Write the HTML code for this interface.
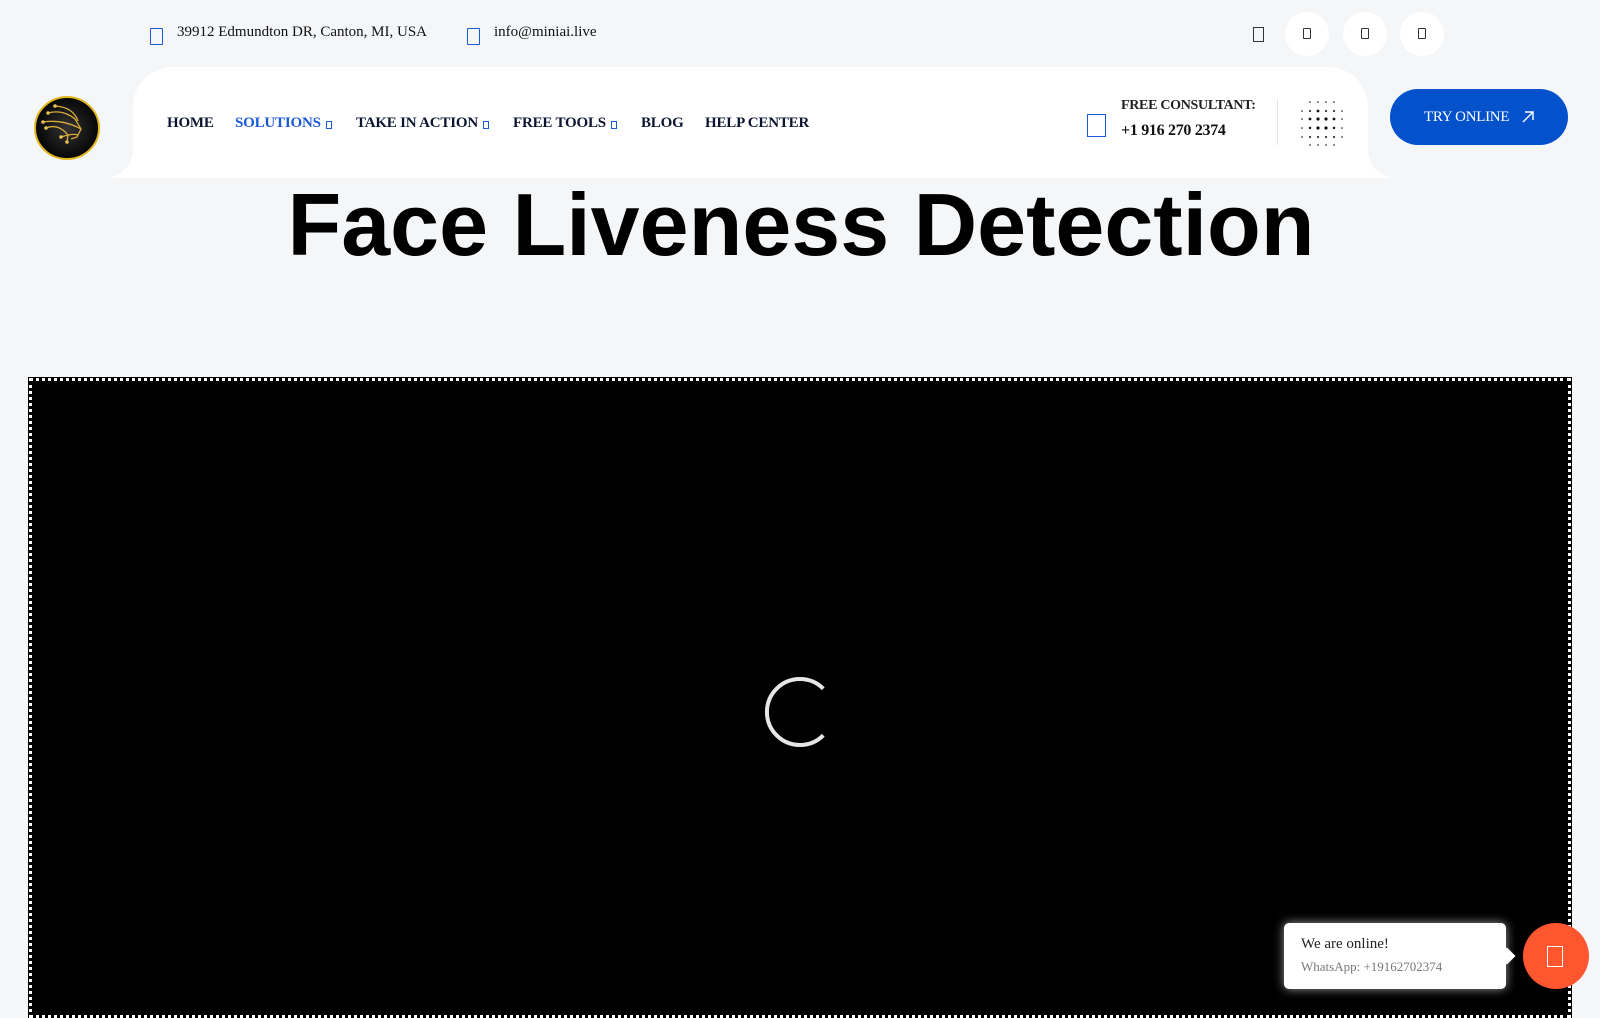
<!DOCTYPE html>
<html><head><meta charset="utf-8"><style>
*{margin:0;padding:0;box-sizing:border-box}
body{width:1600px;height:1000px;overflow:hidden;background:#f4f6f8;font-family:"Liberation Serif",serif;position:relative}
.ab{position:absolute}
.ico{position:absolute;border:1.5px solid #1a5ad6;border-radius:1px}
.top{font-size:15px;color:#111}
.menu{top:115px;font-size:15px;font-weight:bold;color:#0b1531;letter-spacing:-0.2px}
.car{display:inline-block;width:6px;height:8px;border:1px solid #1a5ad6;margin-left:5px;vertical-align:-2px}
.soc{position:absolute;top:12px;width:44px;height:44px;border-radius:50%;background:#fff}
.soc i{position:absolute;left:18px;top:16px;width:8px;height:11px;border:1.5px solid #333;border-radius:1px}
</style></head><body>
<div class="ico" style="left:150px;top:28px;width:13px;height:17px"></div>
<div class="ab top" style="left:177px;top:24px">39912 Edmundton DR, Canton, MI, USA</div>
<div class="ico" style="left:467px;top:28px;width:13px;height:17px"></div>
<div class="ab top" style="left:494px;top:24px">info@miniai.live</div>
<div class="ab" style="left:1253px;top:27px;width:11px;height:15px;border:1.5px solid #333"></div>
<div class="soc" style="left:1285px"><i></i></div>
<div class="soc" style="left:1343px"><i></i></div>
<div class="soc" style="left:1400px"><i></i></div>

<div class="ab" style="left:133px;top:67px;width:1235px;height:111px;background:#fff;border-radius:40px 40px 0 0"></div>
<div class="ab" style="left:105px;top:150px;width:28px;height:28px;background:#fff"></div>
<div class="ab" style="left:105px;top:150px;width:28px;height:28px;background:#f4f6f8;border-radius:0 0 28px 0"></div>
<div class="ab" style="left:1368px;top:150px;width:28px;height:28px;background:#fff"></div>
<div class="ab" style="left:1368px;top:150px;width:28px;height:28px;background:#f4f6f8;border-radius:0 0 0 28px"></div>

<svg class="ab" style="left:33px;top:95px" width="68" height="66" viewBox="0 0 68 66">
<defs><radialGradient id="g"><stop offset="0" stop-color="#333"/><stop offset="1" stop-color="#050505"/></radialGradient></defs>
<ellipse cx="34" cy="33" rx="32" ry="31" fill="url(#g)" stroke="#e6b820" stroke-width="2"/>
<g stroke="#d9ac3a" stroke-width="1.3" fill="none">
<path d="M15 18 Q30 14 42 24 L48 34 L44 42 L38 44"/><path d="M10 27 Q30 24 48 34"/><path d="M22 11 Q40 12 45 26"/><path d="M13 33 Q25 28 35 40 L34 47"/><path d="M28 42 Q40 38 45 40"/></g>
<g fill="#e6c050"><circle cx="15" cy="18" r="1.8"/><circle cx="10" cy="27" r="1.8"/><circle cx="22" cy="11" r="1.8"/><circle cx="13" cy="33" r="1.8"/><circle cx="28" cy="42" r="1.8"/><circle cx="34" cy="47" r="1.8"/></g></svg>

<div class="ab menu" style="left:167px">HOME</div>
<div class="ab menu" style="left:235px;color:#1a5ad6">SOLUTIONS<span class="car"></span></div>
<div class="ab menu" style="left:356px">TAKE IN ACTION<span class="car"></span></div>
<div class="ab menu" style="left:513px">FREE TOOLS<span class="car"></span></div>
<div class="ab menu" style="left:641px">BLOG</div>
<div class="ab menu" style="left:705px">HELP CENTER</div>

<div class="ab" style="left:1087px;top:114px;width:19px;height:23px;border:1.5px solid #1a5ad6"></div>
<div class="ab" style="left:1121px;top:98px;font-size:14px;font-weight:bold;color:#222;letter-spacing:-0.3px">FREE CONSULTANT:</div>
<div class="ab" style="left:1121px;top:122px;font-size:16px;font-weight:bold;color:#111;letter-spacing:-0.3px">+1 916 270 2374</div>
<div class="ab" style="left:1277px;top:99px;width:1px;height:46px;background:#e5e5e5"></div>
<svg class="ab" style="left:1298px;top:99px" width="48" height="48">
<g fill="#111">
<circle cx="12" cy="3" r=".8"/><circle cx="20" cy="3" r=".8"/><circle cx="28" cy="3" r=".8"/><circle cx="36" cy="3" r=".8"/>
<circle cx="4" cy="12" r=".8"/><circle cx="12" cy="12" r="1"/><circle cx="20" cy="12" r="1.4"/><circle cx="28" cy="12" r="1"/><circle cx="36" cy="12" r="1"/><circle cx="44" cy="12" r=".8"/>
<circle cx="4" cy="20" r=".8"/><circle cx="12" cy="20" r="1.4"/><circle cx="20" cy="20" r="1.6"/><circle cx="28" cy="20" r="1.6"/><circle cx="36" cy="20" r="1.4"/><circle cx="44" cy="20" r=".8"/>
<circle cx="4" cy="29" r=".8"/><circle cx="12" cy="29" r="1.2"/><circle cx="20" cy="29" r="1.6"/><circle cx="28" cy="29" r="1.6"/><circle cx="36" cy="29" r="1.2"/><circle cx="44" cy="29" r=".8"/>
<circle cx="4" cy="38" r=".8"/><circle cx="12" cy="38" r="1"/><circle cx="20" cy="38" r="1"/><circle cx="28" cy="38" r="1"/><circle cx="36" cy="38" r="1"/><circle cx="44" cy="38" r=".8"/>
<circle cx="12" cy="46" r=".8"/><circle cx="20" cy="46" r=".8"/><circle cx="28" cy="46" r=".8"/><circle cx="36" cy="46" r=".8"/></g></svg>

<div class="ab" style="left:1390px;top:89px;width:178px;height:56px;border-radius:28px;background:#0352cc;color:#fff;font-size:15px;line-height:56px;padding-left:34px;letter-spacing:-0.3px">TRY ONLINE
<svg style="position:absolute;left:131px;top:21px" width="14" height="14"><path d="M2 12 L12 2 M4 2 H12 V10" stroke="#fff" stroke-width="1.4" fill="none"/></svg></div>

<div class="ab" style="left:0;top:174px;width:1600px;text-align:center;font-family:'Liberation Sans',sans-serif;font-weight:bold;font-size:88px;color:#000;padding-left:2px">Face Liveness Detection</div>

<div class="ab" style="left:29px;top:378px;width:1542px;height:640px;background:#000;border:3px dotted #fff;outline:1px solid #000"></div>
<svg class="ab" style="left:760px;top:672px" width="80" height="80"><path d="M63.3 16.7 A33 33 0 1 0 63.3 63.3" stroke="#e6e6e6" stroke-width="4" fill="none"/></svg>

<div class="ab" style="left:1284px;top:923px;width:222px;height:66px;background:#fff;border-radius:5px;box-shadow:0 0 10px rgba(255,255,255,.6)"></div>
<div class="ab" style="left:1501px;top:950px;width:12px;height:12px;background:#fff;transform:rotate(45deg)"></div>
<div class="ab" style="left:1301px;top:936px;font-size:15px;color:#222">We are online!</div>
<div class="ab" style="left:1301px;top:959px;font-size:13px;color:#777">WhatsApp: +19162702374</div>
<div class="ab" style="left:1523px;top:923px;width:66px;height:66px;border-radius:50%;background:#ff5630"></div>
<div class="ab" style="left:1547px;top:946px;width:16px;height:21px;border:1.5px solid #fff"></div>
</body></html>
